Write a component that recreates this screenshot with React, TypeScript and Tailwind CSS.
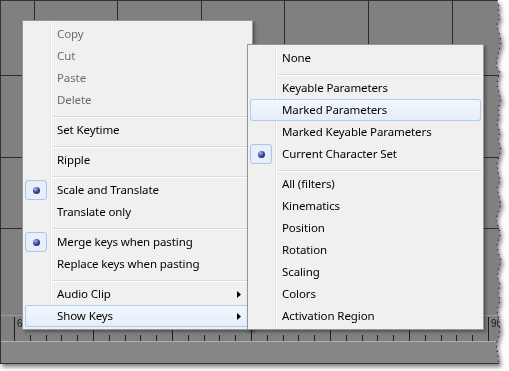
import React from 'react'

type Entry =
  | { sep: true }
  | { sep?: false; label: string; disabled?: boolean; checked?: boolean; arrow?: boolean; active?: boolean }

const mainItems: Entry[] = [
  { label: 'Copy', disabled: true },
  { label: 'Cut', disabled: true },
  { label: 'Paste', disabled: true },
  { label: 'Delete', disabled: true },
  { sep: true },
  { label: 'Set Keytime' },
  { sep: true },
  { label: 'Ripple' },
  { sep: true },
  { label: 'Scale and Translate', checked: true },
  { label: 'Translate only' },
  { sep: true },
  { label: 'Merge keys when pasting', checked: true },
  { label: 'Replace keys when pasting' },
  { sep: true },
  { label: 'Audio Clip', arrow: true },
  { label: 'Show Keys', arrow: true, active: true },
]

const subItems: Entry[] = [
  { label: 'None' },
  { sep: true },
  { label: 'Keyable Parameters' },
  { label: 'Marked Parameters', active: true },
  { label: 'Marked Keyable Parameters' },
  { label: 'Current Character Set', checked: true },
  { sep: true },
  { label: 'All (filters)' },
  { label: 'Kinematics' },
  { label: 'Position' },
  { label: 'Rotation' },
  { label: 'Scaling' },
  { label: 'Colors' },
  { label: 'Activation Region' },
]

const edge =
  '497,0 499,6 498,12 500,18 497,24 498,30 500,36 501,44 499,50 497,58 496,66 500,72 498,78 497,84 499,92 501,100 498,108 499,116 497,124 500,132 498,140 501,148 499,156 497,164 498,172 500,180 497,188 499,196 501,204 498,212 496,220 499,228 500,236 497,244 498,252 501,260 499,268 497,276 500,284 498,292 500,300 497,310 499,320 500,330 496,345 498,355 499,364'

const Menu = ({ items }: { items: Entry[] }) => (
  <div className="border border-[#979797] bg-[linear-gradient(to_right,#f0f0f0_27px,#e2e3e3_27px,#e2e3e3_28px,#ffffff_28px,#ffffff_29px,#f0f0f0_29px)] p-[2px] shadow-[2px_2px_3px_rgba(0,0,0,0.35)]">
    {items.map((it, i) =>
      it.sep ? (
        <div key={i} className="h-[8px] pt-[5px] pl-[27px]">
          <div className="h-[2px] border-t border-[#dadbdb] border-b border-b-white"></div>
        </div>
      ) : (
        <div
          key={i}
          className={
            it.active
              ? 'flex h-[22px] items-center rounded-[3px] bg-gradient-to-b from-[#f3f7fd] to-[#e5edf9] ring-1 ring-inset ring-[#aecbf0]'
              : 'flex h-[22px] items-center'
          }
        >
          <div
            className={
              it.checked
                ? 'flex h-[20px] w-[22px] items-center justify-center rounded-[3px] border border-[#a9c5ec] bg-[#e8eff9]'
                : 'h-[20px] w-[22px]'
            }
          >
            {it.checked && (
              <div className="h-[7px] w-[7px] rounded-full bg-[radial-gradient(circle_at_35%_30%,#b4b7e8_0%,#3c409c_50%,#1d2068_100%)]"></div>
            )}
          </div>
          <span className={it.disabled ? 'ml-[10px] flex-1 text-[#6d6d6d]' : 'ml-[10px] flex-1 text-black'}>{it.label}</span>
          {it.arrow && (
            <svg width="4" height="7" viewBox="0 0 4 7" className="mr-[9px]">
              <path d="M0 0 L4 3.5 L0 7 Z" fill="#000" />
            </svg>
          )}
        </div>
      )
    )}
  </div>
)

const majors = [14, 93, 172, 251, 330, 409, 488]

export default function App() {
  return (
    <div className="relative h-[371px] w-[509px] overflow-hidden bg-white [font-family:'Noto_Sans',sans-serif] text-[11.5px] leading-none tracking-[-0.1px]">
      <div className="relative h-[364px] w-[502px] drop-shadow-[2px_3px_2px_rgba(0,0,0,0.5)]">
        <div className="relative flex h-[364px] w-[502px] flex-col border-t border-l border-b border-[#333333] bg-[#808080] [clip-path:polygon(0_0,497px_0,499px_6px,498px_12px,500px_18px,497px_24px,498px_30px,500px_36px,501px_44px,499px_50px,497px_58px,496px_66px,500px_72px,498px_78px,497px_84px,499px_92px,501px_100px,498px_108px,499px_116px,497px_124px,500px_132px,498px_140px,501px_148px,499px_156px,497px_164px,498px_172px,500px_180px,497px_188px,499px_196px,501px_204px,498px_212px,496px_220px,499px_228px,500px_236px,497px_244px,498px_252px,501px_260px,499px_268px,497px_276px,500px_284px,498px_292px,500px_300px,497px_310px,499px_320px,500px_330px,496px_345px,498px_355px,499px_364px,0_364px)]">
          {/* graph canvas */}
          <div className="relative h-[314px]">
            <svg width="502" height="314" className="absolute left-0 top-0">
              {[33, 116, 200, 283, 367, 451].map((x) => (
                <line key={x} x1={x + 0.5} y1="0" x2={x + 0.5} y2="314" stroke="#2b2b2b" />
              ))}
              {[74, 156, 227].map((y) => (
                <line key={y} x1="0" y1={y + 0.5} x2="502" y2={y + 0.5} stroke="#2b2b2b" />
              ))}
            </svg>
          </div>
          {/* ruler */}
          <div className="h-[26px] border-t border-[#9c9c9c] bg-[#808080]">
            <svg width="502" height="25">
              {majors.map((x) => (
                <g key={x}>
                  <line x1={x - 0.5} y1="1" x2={x - 0.5} y2="25" stroke="#1e1e1e" />
                  {[1, 2, 3, 4].map((k) => (
                    <line key={k} x1={Math.round(x + k * 15.8) - 0.5} y1="19" x2={Math.round(x + k * 15.8) - 0.5} y2="25" stroke="#1e1e1e" />
                  ))}
                </g>
              ))}
              <text x="16" y="11" fontSize="10" fill="#1a1a1a" fontFamily="Liberation Sans, sans-serif">60</text>
              <text x="490" y="11" fontSize="10" fill="#1a1a1a" fontFamily="Liberation Sans, sans-serif">90</text>
            </svg>
          </div>
          <div className="flex-1 border-t border-[#b0b0b0] bg-[#878787]"></div>

          <div className="absolute left-[21px] top-[19px] w-[231px]">
            <Menu items={mainItems} />
          </div>
          <div className="absolute left-[246px] top-[43px] w-[237px]">
            <Menu items={subItems} />
          </div>
        </div>
        <svg width="509" height="364" className="absolute left-0 top-0">
          <polyline points={edge} fill="none" stroke="#000" strokeWidth="1" strokeDasharray="1 4" />
        </svg>
      </div>
    </div>
  )
}
